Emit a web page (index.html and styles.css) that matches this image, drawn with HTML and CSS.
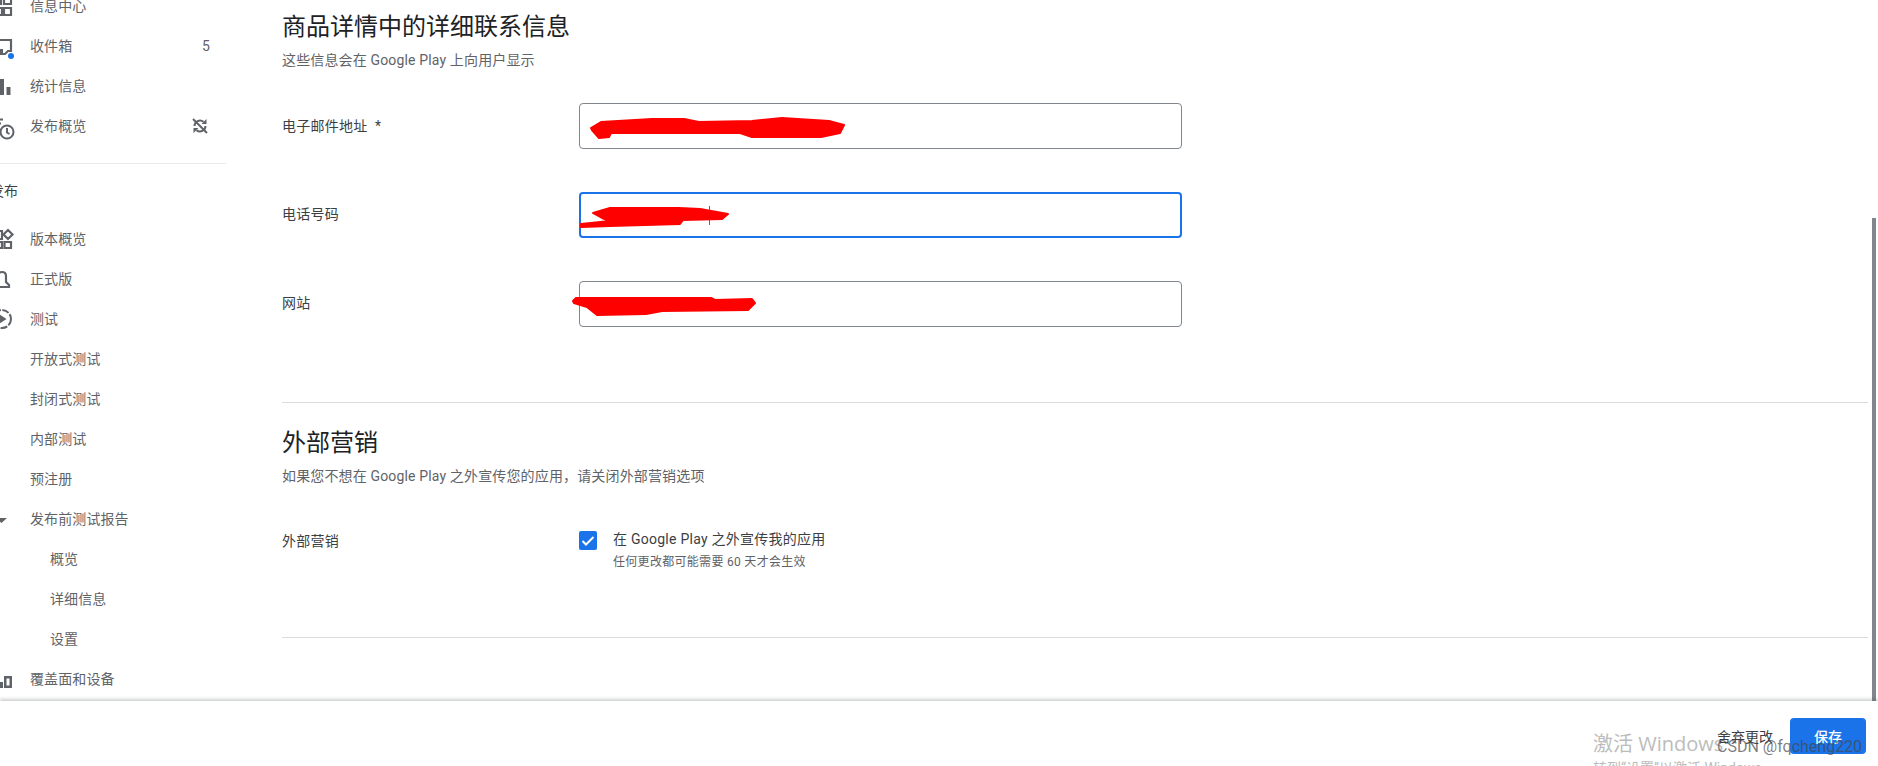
FILE: index.html
```html
<!DOCTYPE html>
<html lang="zh-CN">
<head>
<meta charset="utf-8">
<title>商品详情</title>
<link rel="stylesheet" href="styles.css">
</head>
<body>
<div class="page">
  <div class="body-row">
    <nav class="sidebar">
      <a class="nav-item">
        <svg class="ico" viewBox="0 0 24 24"><path d="M4 3h7v7H4zM14 3h7v7h-7zM4 14h8v7H4zM14 14h7v7h-7z" class="line"/></svg>
        <span class="nav-label">信息中心</span>
      </a>
      <a class="nav-item">
        <svg class="ico" viewBox="0 0 24 24"><path d="M4 6h17v11h-3l-3 3H4z" class="line"/><path d="M8 15h5v6H8z" class="fill"/><circle class="dot" cx="21" cy="22" r="3"/></svg>
        <span class="nav-label">收件箱</span><span class="nav-count">5</span>
      </a>
      <a class="nav-item">
        <svg class="ico" viewBox="0 0 24 24"><path d="M4 5h5v16H4zM10 5h4v16h-4zM16.500 13h4v8h-4z" class="fill"/></svg>
        <span class="nav-label">统计信息</span>
      </a>
      <a class="nav-item">
        <svg class="ico" viewBox="0 0 24 24"><circle cx="17" cy="18" r="6.500" class="thin"/><path d="M17 14v4.500l2.500 1.500M8 5.500h5M8 9.500h3" class="thin"/></svg>
        <span class="nav-label">发布概览</span>
        <svg class="nav-end" viewBox="0 0 16 16"><path d="M2.500 8a5.500 5.500 0 0 1 9-4.200M13.500 8a5.500 5.500 0 0 1-9 4.200" class="sync"/><path d="M9.500 6h5V1zM6.500 10h-5v5z" class="fill"/><path d="M1 1l14 14" class="sync"/></svg>
      </a>
      <div class="nav-divider"></div>
      <div class="nav-section">发布</div>
      <a class="nav-item">
        <svg class="ico" viewBox="0 0 24 24"><path d="M4 4h8v8H4zM4 15h8v6H4zM14.500 15h6.500v6h-6.500zM18 3l4.500 4.500L18 12l-4.500-4.500z" class="line"/></svg>
        <span class="nav-label">版本概览</span>
      </a>
      <a class="nav-item">
        <svg class="ico" viewBox="0 0 24 24"><path d="M5 20v-3l3-2V9q0-4 4-4t4 4v6l3 3v2z" class="line"/></svg>
        <span class="nav-label">正式版</span>
      </a>
      <a class="nav-item">
        <svg class="ico" viewBox="0 0 24 24"><circle cx="12" cy="12" r="9" class="dash"/><path d="M9 7l7.500 5L9 17z" class="fill"/></svg>
        <span class="nav-label">测试</span>
      </a>
      <a class="nav-item"><span class="ico"></span><span class="nav-label">开放式测试</span></a>
      <a class="nav-item"><span class="ico"></span><span class="nav-label">封闭式测试</span></a>
      <a class="nav-item"><span class="ico"></span><span class="nav-label">内部测试</span></a>
      <a class="nav-item"><span class="ico"></span><span class="nav-label">预注册</span></a>
      <a class="nav-item">
        <svg class="ico" viewBox="0 0 24 24"><path d="M6 11h11l-5.500 5z" class="fill"/></svg>
        <span class="nav-label">发布前测试报告</span>
      </a>
      <a class="nav-item sub"><span class="nav-label">概览</span></a>
      <a class="nav-item sub"><span class="nav-label">详细信息</span></a>
      <a class="nav-item sub"><span class="nav-label">设置</span></a>
      <a class="nav-item">
        <svg class="ico" viewBox="0 0 24 24"><path d="M4 15h9v6H4zM14 9h8v12h-8zM16.500 11.500v7h3v-7z" class="fill" fill-rule="evenodd"/></svg>
        <span class="nav-label">覆盖面和设备</span>
      </a>
    </nav>
    <main class="content">
      <section class="section first-section">
        <h2 class="section-title">商品详情中的详细联系信息</h2>
        <p class="section-desc">这些信息会在 Google Play 上向用户显示</p>
        <div class="field first-field">
          <label class="field-label">电子邮件地址 &nbsp;*</label>
          <div class="input">
            <svg class="scribble" viewBox="0 0 300 46"><path d="M12 25L22 19 73 16 105 16 120 19 173 18 203 15 250 18 265 22 261 30 242 34 173 34 161 30 48 30 32 30 30 34 20 35 13 27Z" class="red"/></svg>
          </div>
        </div>
        <div class="field">
          <label class="field-label raised">电话号码</label>
          <div class="input focused">
            <span class="caret"></span>
            <svg class="scribble" viewBox="0 0 300 46"><path d="M13 20L30 15 99 15 120 16 148 21 142 26 103 27 100 31 30 33 1 34 1 31 30 28 22 25Z" class="red"/></svg>
          </div>
        </div>
        <div class="field">
          <label class="field-label raised-1">网站</label>
          <div class="input">
            <svg class="scribble" viewBox="0 0 300 46"><path d="M-6 20L-3 17 132 17 136 19 173 18 176 22 169 29 83 30 67 33 18 34 8 26-5 22Z" class="red"/></svg>
          </div>
        </div>
      </section>
      <section class="section second-section">
        <h2 class="section-title">外部营销</h2>
        <p class="section-desc">如果您不想在 Google Play 之外宣传您的应用，请关闭外部营销选项</p>
        <div class="field check-field">
          <div class="field-label">外部营销</div>
          <div class="check-row">
            <span class="checkbox"><svg viewBox="0 0 18 19"><path d="M3.500 10l3.500 3.500 7.500-7.500" class="tick"/></svg></span>
            <div class="check-text">
              <div class="check-title">在 Google Play 之外宣传我的应用</div>
              <div class="check-note">任何更改都可能需要 60 天才会生效</div>
            </div>
          </div>
        </div>
      </section>
    </main>
    <div class="scrollbar"><div class="scroll-thumb"></div></div>
  </div>
  <footer class="footer">
    <div class="watermark">
      <div class="wm-title">激活 Windows</div>
      <div class="wm-sub">转到“设置”以激活 Windows。</div>
    </div>
    <button class="btn-text">舍弃更改</button>
    <button class="btn-save">保存</button>
    <div class="csdn">CSDN @fqcheng220</div>
  </footer>
</div>
</body>
</html>
```
FILE: styles.css
```css
* { box-sizing: border-box; }
html, body { margin: 0; height: 100%; overflow: hidden; background: #fff; }
body { font-family: Roboto, "Noto Sans CJK SC", sans-serif; font-size: 14px; color: #3c4043; }
.page { height: 766px; display: flex; flex-direction: column; }
.body-row { height: 701px; display: flex; overflow: hidden; }

.sidebar { width: 282px; flex: none; overflow: hidden; padding-right: 56px; margin-top: -14px; }
.nav-item { display: flex; align-items: center; height: 40px; color: #5f6368; line-height: 20px; letter-spacing: .1px; }
.ico { width: 24px; height: 24px; margin-left: -10px; margin-right: 16px; flex: none; overflow: visible; }
.ico .line { fill: none; stroke: #5f6368; stroke-width: 2.2; }
.ico .thin { fill: none; stroke: #5f6368; stroke-width: 2; }
.ico .dash { fill: none; stroke: #5f6368; stroke-width: 2; stroke-dasharray: 7 1.5; }
.fill { fill: #5f6368; }
.sync { fill: none; stroke: #5f6368; stroke-width: 2; }
.dot { fill: #1a73e8; }
.nav-label { flex: 1; }
.nav-count { margin-right: 16px; }
.nav-end { width: 16px; height: 16px; margin-right: 18px; }
.nav-item.sub { padding-left: 50px; }
.nav-divider { height: 1px; background: #e8eaed; margin-top: 17px; }
.nav-section { height: 20px; line-height: 20px; margin: 17px 0 18px -10px; color: #3c4043; }

.content { flex: 1; min-width: 0; }
.section { border-bottom: 1px solid #dadce0; }
.first-section { height: 403px; padding-top: 11px; }
.second-section { height: 235px; padding-top: 24px; }
.section-title { margin: 0; font-size: 24px; font-weight: 400; line-height: 32px; color: #202124; }
.section-desc { margin: 7px 0 0; font-size: 14px; line-height: 20px; letter-spacing: .15px; color: #5f6368; }

.field { display: flex; align-items: center; margin-top: 43px; }
.first-field { margin-top: 33px; }
.field-label { width: 297px; flex: none; line-height: 20px; letter-spacing: .25px; color: #3c4043; }
.raised { margin-bottom: 2px; }
.raised-1 { margin-bottom: 2px; }
.input { position: relative; width: 603px; height: 46px; border: 1px solid #80868b; border-radius: 4px; }
.input.focused { border: 2px solid #1a73e8; }
.scribble { position: absolute; left: -1px; top: -1px; width: 300px; height: 46px; overflow: visible; }
.red { fill: #f00; stroke: #f00; stroke-width: 2; stroke-linejoin: round; }
.caret { position: absolute; left: 128px; top: 12px; width: 1px; height: 19px; background: #1a73e8; }

.check-field { align-items: flex-start; margin-top: 45px; }
.check-row { display: flex; }
.checkbox { width: 18px; height: 19px; margin-right: 16px; border-radius: 2px; background: #1a73e8; display: block; flex: none; }
.checkbox svg { display: block; }
.tick { fill: none; stroke: #fff; stroke-width: 2; }
.check-text { margin-top: -2px; }
.check-title { line-height: 20px; letter-spacing: .25px; color: #3c4043; }
.check-note { font-size: 12px; line-height: 16px; margin-top: 5px; letter-spacing: .3px; color: #5f6368; }

.scrollbar { width: 10px; flex: none; position: relative; }
.scroll-thumb { position: absolute; top: 218px; left: 4px; width: 4px; bottom: 0; background: #80868b; }

.footer { position: relative; flex: 1; background: #fff; box-shadow: 0 -2px 3px rgba(60,64,67,.25); display: flex; justify-content: flex-end; align-items: flex-start; padding: 17px 12px 0 0; overflow: hidden; }
.btn-text { position: relative; border: 0; background: none; font: inherit; color: #3c4043; height: 36px; padding: 0 16px; margin-right: 1px; }
.btn-save { border: 0; background: #1a73e8; color: #fff; font: inherit; font-weight: 500; width: 76px; height: 36px; border-radius: 4px; }
.watermark { position: absolute; left: 1593px; top: 29px; color: #bcbcbc; white-space: nowrap; }
.wm-title { font-family: "Open Sans", "Noto Sans CJK SC", sans-serif; font-size: 20px; line-height: 28px; }
.wm-sub { font-size: 14px; line-height: 20px; margin-top: 0; }
.csdn { position: absolute; left: 1717px; top: 36px; font-size: 16px; line-height: 20px; white-space: nowrap; color: rgba(70,70,70,.7); }
```
